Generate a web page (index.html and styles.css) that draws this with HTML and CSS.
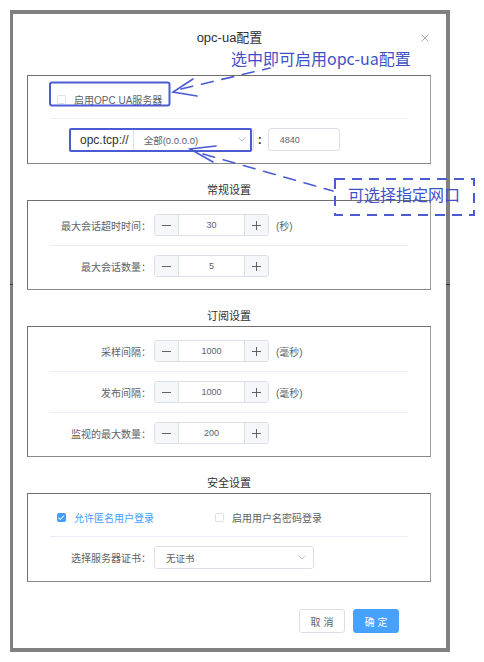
FILE: index.html
```html
<!DOCTYPE html>
<html lang="zh-CN">
<head>
	<meta charset="UTF-8"/>
	<title>opc-ua配置</title>
	<link rel="stylesheet" href="styles.css">
</head>
<body>
	<div class="shot">
		<div class="dlg-head">
			<span></span>
			<span class="dlg-title">opc-ua配置</span>
			<span class="dlg-close"><svg width="8" height="8" viewBox="0 0 8 8"><path d="M0.5 0.5L7.5 7.5M7.5 0.5L0.5 7.5" stroke="#a8abb2" stroke-width="1"/></svg></span>
		</div>

		<div class="dlg-body">
			<!-- 服务开关与监听地址 -->
			<div class="group">
				<div class="row">
					<label class="check"><span class="box"></span>启用OPC UA服务器</label>
				</div>
				<div class="row">
					<span class="scheme">opc.tcp://</span>
					<div class="select ip"><span>全部(0.0.0.0)</span><i class="chev"><svg width="8" height="5" viewBox="0 0 8 5"><path d="M0.5 0.5L4 4L7.5 0.5" fill="none" stroke="#c0c4cc"/></svg></i></div>
					<span class="colon">:</span>
					<div class="input port">4840</div>
				</div>
			</div>

			<div class="group-title">常规设置</div>
			<div class="group">
				<div class="row">
					<span class="label">最大会话超时时间：</span>
					<div class="num">
						<span class="step dec"><svg width="9" height="9" viewBox="0 0 9 9"><path d="M0 4.5H9" stroke="#606266"/></svg></span>
						<span class="val">30</span>
						<span class="step inc"><svg width="9" height="9" viewBox="0 0 9 9"><path d="M0 4.5H9M4.5 0V9" stroke="#606266"/></svg></span>
					</div>
					<span class="unit">(秒)</span>
				</div>
				<div class="row">
					<span class="label">最大会话数量：</span>
					<div class="num">
						<span class="step dec"><svg width="9" height="9" viewBox="0 0 9 9"><path d="M0 4.5H9" stroke="#606266"/></svg></span>
						<span class="val">5</span>
						<span class="step inc"><svg width="9" height="9" viewBox="0 0 9 9"><path d="M0 4.5H9M4.5 0V9" stroke="#606266"/></svg></span>
					</div>
				</div>
			</div>

			<div class="group-title">订阅设置</div>
			<div class="group">
				<div class="row">
					<span class="label">采样间隔：</span>
					<div class="num">
						<span class="step dec"><svg width="9" height="9" viewBox="0 0 9 9"><path d="M0 4.5H9" stroke="#606266"/></svg></span>
						<span class="val">1000</span>
						<span class="step inc"><svg width="9" height="9" viewBox="0 0 9 9"><path d="M0 4.5H9M4.5 0V9" stroke="#606266"/></svg></span>
					</div>
					<span class="unit">(毫秒)</span>
				</div>
				<div class="row">
					<span class="label">发布间隔：</span>
					<div class="num">
						<span class="step dec"><svg width="9" height="9" viewBox="0 0 9 9"><path d="M0 4.5H9" stroke="#606266"/></svg></span>
						<span class="val">1000</span>
						<span class="step inc"><svg width="9" height="9" viewBox="0 0 9 9"><path d="M0 4.5H9M4.5 0V9" stroke="#606266"/></svg></span>
					</div>
					<span class="unit">(毫秒)</span>
				</div>
				<div class="row">
					<span class="label">监视的最大数量：</span>
					<div class="num">
						<span class="step dec"><svg width="9" height="9" viewBox="0 0 9 9"><path d="M0 4.5H9" stroke="#606266"/></svg></span>
						<span class="val">200</span>
						<span class="step inc"><svg width="9" height="9" viewBox="0 0 9 9"><path d="M0 4.5H9M4.5 0V9" stroke="#606266"/></svg></span>
					</div>
				</div>
			</div>

			<div class="group-title">安全设置</div>
			<div class="group">
				<div class="row">
					<label class="check on"><span class="box"></span>允许匿名用户登录</label>
					<label class="check second"><span class="box"></span>启用用户名密码登录</label>
				</div>
				<div class="row">
					<span class="label">选择服务器证书：</span>
					<div class="select cert"><span>无证书</span><i class="chev"><svg width="8" height="5" viewBox="0 0 8 5"><path d="M0.5 0.5L4 4L7.5 0.5" fill="none" stroke="#c0c4cc"/></svg></i></div>
				</div>
			</div>
		</div>

		<div class="dlg-foot">
			<button class="btn">取消</button>
			<button class="btn primary">确定</button>
		</div>
	</div>

	<!-- 标注层 -->
	<svg class="marks" width="484" height="662" viewBox="0 0 484 662">
		<rect x="10" y="284" width="3" height="1" fill="#3a3a3a"/>
		<rect x="446" y="284" width="4" height="1" fill="#3a3a3a"/>
		<g fill="none" stroke="#4a5bd4" stroke-width="2">
			<rect x="50" y="82.5" width="119.5" height="23" rx="2"/>
			<rect x="70" y="129" width="181" height="22" rx="1"/>
			<rect x="335" y="179" width="139" height="36" stroke-dasharray="10 7"/>
		</g>
		<g fill="none" stroke="#4a5bd4" stroke-width="1.6" stroke-linecap="round">
			<path d="M193 79L173 92L197 96"/>
			<path d="M181 89L270 68" stroke-dasharray="12 9"/>
			<path d="M216 146L190 149L213 162"/>
			<path d="M203 154L333 191" stroke-dasharray="12 9"/>
		</g>
		<g class="note">
			<text x="231" y="65">选中即可启用opc-ua配置</text>
			<text x="348" y="201">可选择指定网口</text>
		</g>
	</svg>
</body>
</html>
```

FILE: styles.css
```css
* { margin: 0; padding: 0; box-sizing: border-box; }
body {
	width: 484px;
	height: 662px;
	overflow: hidden;
	position: relative;
	background-color: #fff;
	font-family: "Liberation Sans", "Noto Sans CJK SC", sans-serif;
	color: #606266;
}

/* 外框 */
.shot {
	width: 440px;
	height: 642px;
	margin: 10px 0 0 10px;
	border: 4px solid #808080;
	border-left-width: 3px;
	background-color: #fff;
	display: flex;
	flex-direction: column;
}

.dlg-head {
	display: grid;
	grid-template-columns: 1fr auto 1fr;
	align-items: center;
	padding: 16px 17px 0;
	height: 32px;
}
.dlg-title {
	font-size: 13px;
	line-height: 16px;
	color: #303133;
}
.dlg-close {
	justify-self: end;
	display: flex;
}

.dlg-body {
	padding: 29px 15px 0 14px;
}

.group {
	border: 1px solid;
	border-color: #707070 #9d9d9d #888 #707070;
	padding: 4px 22px 3px;
}
.group-title {
	text-align: center;
	font-size: 11px;
	line-height: 16px;
	color: #303133;
	margin: 18px 0 2px;
}

.row {
	display: flex;
	align-items: center;
	padding: 9px 0;
}
.row + .row {
	border-top: 1px solid #ebeef5;
}

.label {
	width: 101px;
	margin-right: 3px;
	flex-shrink: 0;
	text-align: right;
	font-size: 10px;
	color: #606266;
}
.unit {
	margin-left: 7px;
	font-size: 10px;
}

/* 复选框 */
.check {
	display: flex;
	align-items: center;
	height: 20px;
	margin-left: 7px;
	font-size: 10px;
	color: #606266;
}
.check .box {
	position: relative;
	width: 9px;
	height: 9px;
	margin-right: 8px;
	border: 1px solid #dcdfe6;
	border-radius: 1.5px;
	background-color: #fff;
}
.check.on { color: #409eff; }
.check.on .box {
	background-color: #409eff;
	border-color: #409eff;
}
.check.on .box::after {
	content: "";
	position: absolute;
	left: 2px;
	top: 0;
	width: 2px;
	height: 4.5px;
	border: solid #fff;
	border-width: 0 1px 1px 0;
	transform: rotate(45deg);
}
.check.second { margin-left: 61px; }

/* 地址行 */
.scheme {
	margin-left: 30px;
	font-size: 12px;
	color: #303133;
}
.colon {
	margin: 0 6px 0 4px;
	font-size: 12px;
	font-weight: bold;
	color: #303133;
}

.select {
	display: flex;
	align-items: center;
	justify-content: space-between;
	height: 23px;
	padding: 0 7px 0 10px;
	border: 1px solid #dcdfe6;
	border-radius: 3px;
	font-size: 9.5px;
	color: #606266;
}
.select .chev { display: flex; }
.select.ip {
	width: 121px;
	margin-left: 4px;
}
.select.cert { width: 160px; padding-left: 11px; }

.input {
	display: flex;
	align-items: center;
	height: 23px;
	padding-left: 11px;
	border: 1px solid #dcdfe6;
	border-radius: 3px;
	font-size: 9px;
	color: #606266;
}
.input.port { width: 72px; }

/* 计数器 */
.num {
	display: flex;
	width: 115px;
	height: 22px;
	border: 1px solid #dcdfe6;
	border-radius: 3px;
	overflow: hidden;
	font-size: 9px;
}
.num .step {
	width: 24px;
	display: flex;
	align-items: center;
	justify-content: center;
	background-color: #f5f7fa;
}
.num .dec { border-right: 1px solid #dcdfe6; }
.num .inc { border-left: 1px solid #dcdfe6; }
.num .val {
	flex: 1;
	display: flex;
	align-items: center;
	justify-content: center;
	color: #606266;
}

.dlg-foot {
	margin-top: auto;
	display: flex;
	justify-content: flex-end;
	gap: 8px;
	padding: 0 47px 15px 0;
}
.btn {
	width: 46px;
	height: 24px;
	padding-left: 3px;
	border: 1px solid #dcdfe6;
	border-radius: 3px;
	background-color: #fff;
	font-family: inherit;
	font-size: 10px;
	letter-spacing: 3px;
	color: #606266;
}
.btn.primary {
	background-color: #46a1ff;
	border-color: #46a1ff;
	color: #fff;
}

.marks {
	position: absolute;
	left: 0;
	top: 0;
	pointer-events: none;
}
.note text {
	font-family: "Noto Sans CJK SC", sans-serif;
	font-size: 16px;
	fill: #3f51c8;
}
```
